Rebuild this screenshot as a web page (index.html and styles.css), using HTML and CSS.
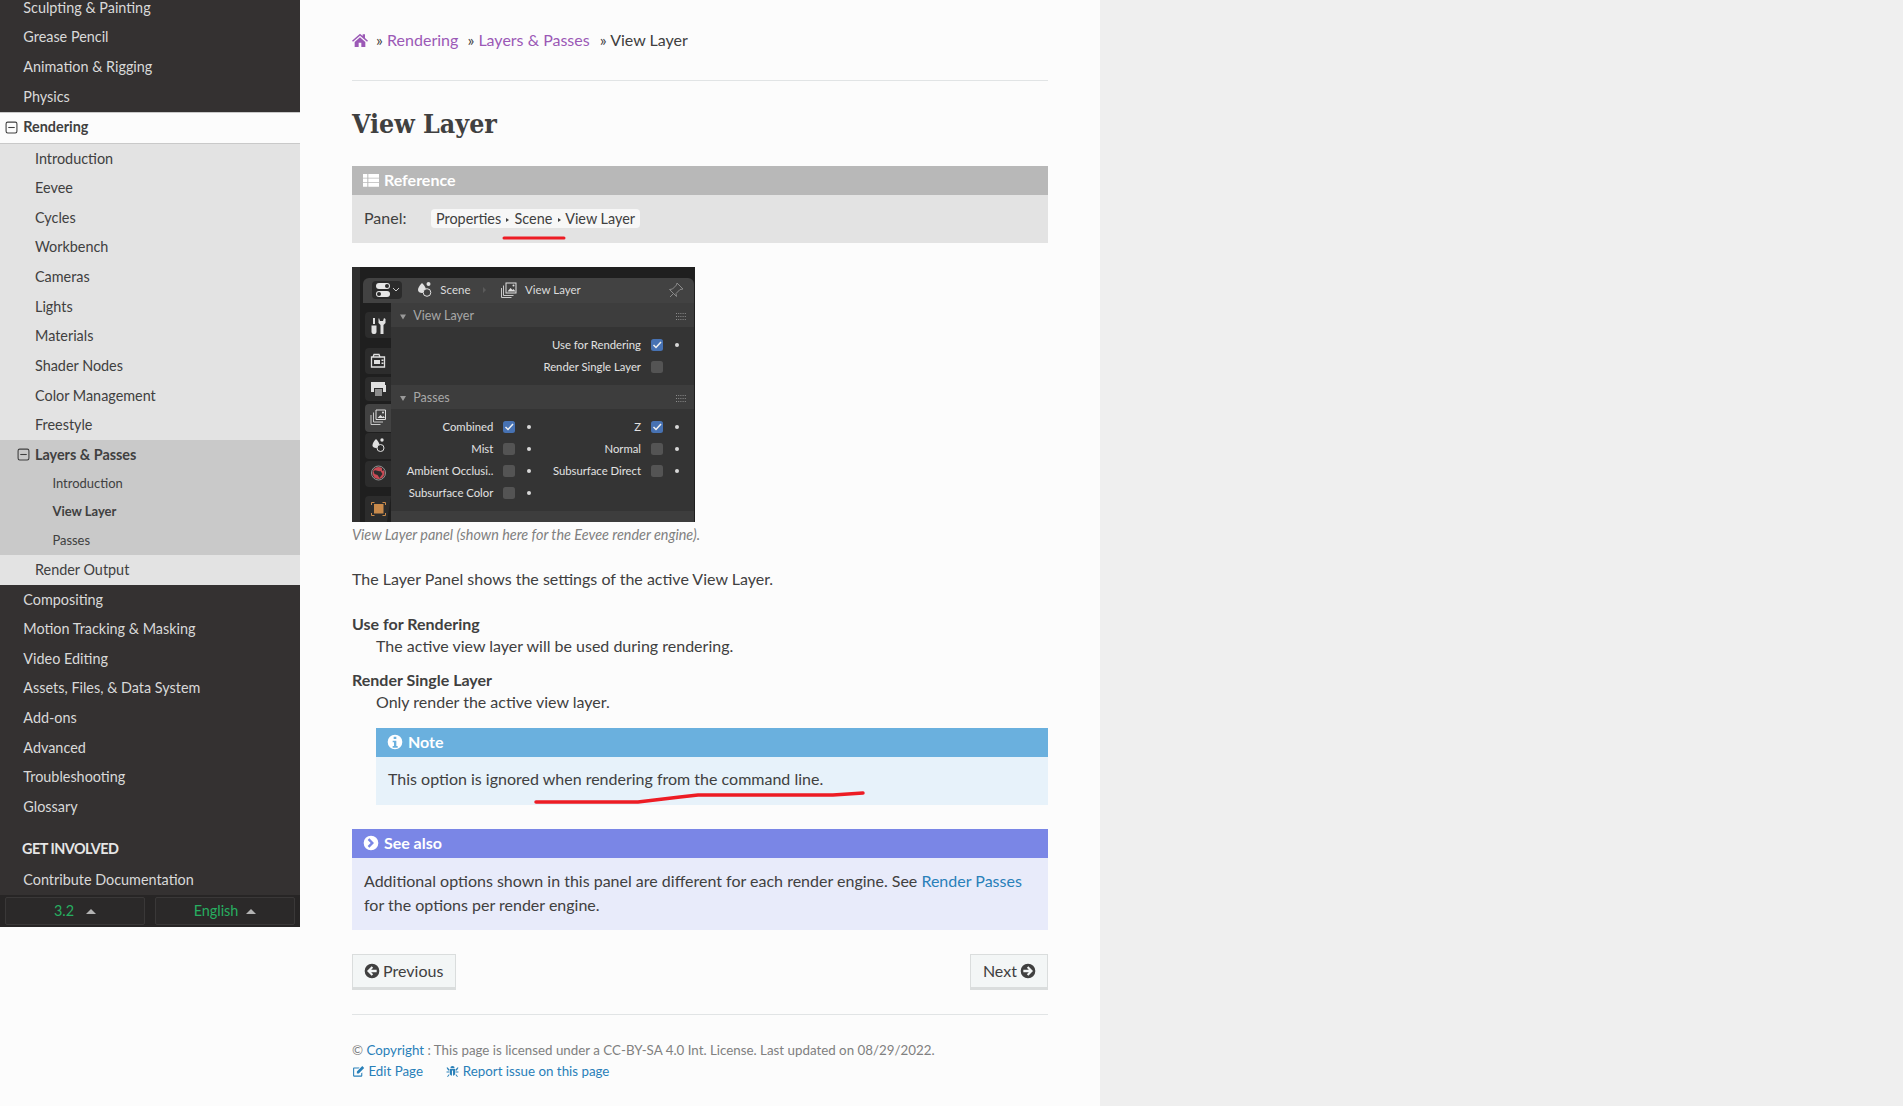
FILE: index.html
```html
<!DOCTYPE html>
<html lang="en">
<head>
    <meta charset="utf-8">
    <meta name="viewport" content="width=device-width, initial-scale=1.0">
    <title>View Layer</title>
    <link rel="stylesheet" href="styles.css">
</head>
<body>
<div class="page">
    <!-- sidebar, scrolled down a bit like the original -->
    <nav class="sidebar">
        <div class="menu">
            <a class="l1">Sculpting &amp; Painting</a>
            <a class="l1">Grease Pencil</a>
            <a class="l1">Animation &amp; Rigging</a>
            <a class="l1">Physics</a>
            <a class="l1 current">
                <svg class="toggle" viewBox="0 0 12 12"><rect x="1" y="1" width="10" height="10" rx="1.5"/><path d="M3 6h6"/></svg>
                Rendering
            </a>
            <div class="sub">
                <a class="l2">Introduction</a>
                <a class="l2">Eevee</a>
                <a class="l2">Cycles</a>
                <a class="l2">Workbench</a>
                <a class="l2">Cameras</a>
                <a class="l2">Lights</a>
                <a class="l2">Materials</a>
                <a class="l2">Shader Nodes</a>
                <a class="l2">Color Management</a>
                <a class="l2">Freestyle</a>
                <div class="sub-current">
                    <a class="l2 open">
                        <svg class="toggle" viewBox="0 0 12 12"><rect x="1" y="1" width="10" height="10" rx="1.5"/><path d="M3 6h6"/></svg>
                        Layers &amp; Passes
                    </a>
                    <a class="l3">Introduction</a>
                    <a class="l3 active">View Layer</a>
                    <a class="l3">Passes</a>
                </div>
                <a class="l2">Render Output</a>
            </div>
            <a class="l1">Compositing</a>
            <a class="l1">Motion Tracking &amp; Masking</a>
            <a class="l1">Video Editing</a>
            <a class="l1">Assets, Files, &amp; Data System</a>
            <a class="l1">Add-ons</a>
            <a class="l1">Advanced</a>
            <a class="l1">Troubleshooting</a>
            <a class="l1">Glossary</a>
            <p class="caption">GET INVOLVED</p>
            <a class="l1">Contribute Documentation</a>
        </div>
        <div class="switchers">
            <div class="switcher"><span>3.2</span><i class="caret"></i></div>
            <div class="switcher narrow"><span>English</span><i class="caret"></i></div>
        </div>
    </nav>

    <main class="content">
        <div class="breadcrumbs">
            <a class="home" href="#"><svg class="icon" viewBox="0 0 24 24"><path d="M12 2.500 0 13l1.500 1.800L12 5.700l10.500 9.100L24 13l-4.500-3.900V3.500h-3.500v2.600zM4 15v7.500h6V16h4v6.500h6V15L12 8z"/></svg></a>
            <span class="sep">»</span> <a href="#">Rendering</a>
            <span class="sep gap">»</span> <a href="#">Layers &amp; Passes</a>
            <span class="sep last">»</span> View Layer
        </div>
        <hr class="rule">

        <h1>View Layer</h1>

        <div class="admonition reference">
            <p class="admonition-title">
                <svg class="icon" viewBox="0 0 24 24"><path d="M0 3h6.500v5.500H0zM8 3h16v5.500H8zM0 9.800h6.500v5.500H0zM8 9.800h16v5.500H8zM0 16.600h6.500V22H0zM8 16.600h16V22H8z"/></svg>
                Reference
            </p>
            <div class="admonition-body panel-line">
                <span class="field-name">Panel:</span>
                <span class="guilabel">Properties <i class="tri"></i> Scene <i class="tri"></i> View Layer</span>
            </div>
            <svg class="scribble" width="70" height="8" viewBox="0 0 70 8"><path d="M2 4h60"/></svg>
        </div>

        <svg class="shot" width="343" height="255" viewBox="0 0 343 255">
            <rect width="343" height="255" fill="#1f1f1f"/>
            <rect width="8" height="255" fill="#2f2f2f"/>
            <path d="M11 36V17a6 6 0 0 1 6-6h319a6 6 0 0 1 6 6v19z" fill="#424242"/>
            <rect x="39" y="36" width="303" height="24" fill="#3d3d3d"/>
            <rect x="39" y="60" width="303" height="58" fill="#343434"/>
            <rect x="39" y="118" width="303" height="24" fill="#3d3d3d"/>
            <rect x="39" y="142" width="303" height="102" fill="#343434"/>
            <rect x="39" y="244" width="303" height="11" fill="#3d3d3d"/>

            <!-- tabs -->
            <g fill="#2c2c2c">
                <path d="M39 45H17a4 4 0 0 0-4 4v18a4 4 0 0 0 4 4h22z"/>
                <path d="M39 81H17a4 4 0 0 0-4 4v18a4 4 0 0 0 4 4h22z"/>
                <path d="M39 110H17a4 4 0 0 0-4 4v16a4 4 0 0 0 4 4h22z"/>
                <path d="M39 166H17a4 4 0 0 0-4 4v18a4 4 0 0 0 4 4h22z"/>
                <path d="M39 194H17a4 4 0 0 0-4 4v18a4 4 0 0 0 4 4h22z"/>
                <path d="M39 229H17a4 4 0 0 0-4 4v22h22z"/>
            </g>
            <path d="M39 137H17a4 4 0 0 0-4 4v20a4 4 0 0 0 4 4h22z" fill="#424242"/>

            <!-- editor type button -->
            <rect x="20" y="14" width="30" height="18" rx="4" fill="#2b2b2b"/>
            <rect x="24" y="16" width="14" height="6" rx="3" fill="#e6e6e6"/>
            <rect x="24" y="24" width="14" height="6" rx="3" fill="#e6e6e6"/>
            <circle cx="35" cy="19" r="2" fill="#2b2b2b"/>
            <circle cx="27" cy="27" r="2" fill="#2b2b2b"/>
            <path d="M41 21l3 3 3-3" fill="none" stroke="#ccc" stroke-width="1"/>

            <!-- breadcrumb icons -->
            <path d="M70 16c3 3 4 5 4 7 0 2-2 3-4 3s-4-1-4-3c0-2 1-4 4-7z" fill="#e0e0e0"/>
            <circle cx="76.500" cy="17" r="2" fill="#e0e0e0"/>
            <circle cx="75" cy="25.500" r="3.800" fill="#424242" stroke="#e0e0e0"/>
            <path d="M131 20l3 3-3 3z" fill="#5a5a5a"/>
            <rect x="154" y="16" width="10" height="10" fill="#424242" stroke="#e0e0e0"/>
            <path d="M151.500 18.500v10h10M149.500 21v9.500h10" fill="none" stroke="#c8c8c8"/>
            <path d="M155.500 24.500l3-3.500 2 2 1-1 2 2.500z" fill="#e0e0e0"/>
            <circle cx="161.500" cy="18.500" r="1" fill="#e0e0e0"/>
            <path d="M318 30l4-4M325 16l6 6-3 .5-4 4 .5 3-7-7 3-.5 4-4z" fill="none" stroke="#8a8a8a"/>

            <!-- tab icons -->
            <g fill="#e0e0e0">
                <path d="M21 51h2v6h-2zM19.500 58.500h5V65a2 2 0 0 1-2 2h-1a2 2 0 0 1-2-2z"/>
                <path d="M27 51l1 3h3l1-3 1.500 1v4l-2 2v9h-3v-9l-2-2v-4z"/>
                <path d="M19.500 90h13v10h-13zM22 87.500h5l1 2.500h-7z" fill="none" stroke="#e0e0e0" stroke-width="1.300"/>
                <path d="M22 93h6v4h-6zM29.500 92.500h2v1.500h-2zM29.500 95.500h2v1.500h-2z"/>
                <path d="M19 115h14v3h1v7h-3v-4H22v4h-3z"/>
                <path d="M23 122h7v7h-7z" fill="#8c8c8c"/>
                <path d="M24 172c2.500 2.500 3.500 4.500 3.500 6.500 0 1.500-1.500 2.500-3.500 2.500s-3.500-1-3.500-2.500c0-2 1-4 3.500-6.500z"/>
                <circle cx="30" cy="173" r="1.700"/>
                <circle cx="28.500" cy="181" r="3.500" fill="#2c2c2c" stroke="#e0e0e0"/>
                <path d="M24 143h9.500v9.500H24z" fill="#424242" stroke="#e0e0e0"/>
                <path d="M21.500 145.500v9.500H31M19 148v9.500h9.500" fill="none" stroke="#c8c8c8"/>
                <path d="M25.500 151l3-3 2 2 1-1 1.500 2z"/>
                <circle cx="31" cy="145.500" r="1"/>
            </g>
            <circle cx="26.500" cy="206" r="6" fill="#c94b55"/>
            <path d="M21.500 204c3-2 4 1 7 0l2 3-3 4-2-3-3-1zM30 200l2 3-2 1z" fill="#2c2c2c"/>
            <circle cx="26.500" cy="206" r="7" fill="none" stroke="#a8a8a8" stroke-width=".800"/>
            <rect x="22" y="237" width="9.500" height="9.500" fill="#c98a4b"/>
            <path d="M19.500 238v-2.500h3M30.500 235.500h3v2.500M33.500 246v2.500h-3M22.500 248.500h-3V246" fill="none" stroke="#c98a4b"/>

            <!-- panel headers -->
            <path d="M48 47.500h6l-3 5zM48 129h6l-3 5z" fill="#9a9a9a"/>
            <path d="M324 46.500h10M324 49.500h10M324 52.500h10M324 128.500h10M324 131.500h10M324 134.500h10" fill="none" stroke="#8c8c8c" stroke-dasharray="1 1.200"/>

            <!-- labels -->
            <g class="shot-text">
                <text x="88.300" y="27">Scene</text>
                <text x="173" y="27">View Layer</text>
            </g>
            <g class="shot-head">
                <text x="61.300" y="53">View Layer</text>
                <text x="61.300" y="134.500">Passes</text>
            </g>
            <g class="shot-label">
                <text x="289" y="82.300">Use for Rendering</text>
                <text x="289" y="104.300">Render Single Layer</text>
                <text x="141.300" y="164">Combined</text>
                <text x="141.300" y="186">Mist</text>
                <text x="141.300" y="208">Ambient Occlusi..</text>
                <text x="141.300" y="230">Subsurface Color</text>
                <text x="289" y="164">Z</text>
                <text x="289" y="186">Normal</text>
                <text x="289" y="208">Subsurface Direct</text>
            </g>

            <!-- checkboxes -->
            <g fill="#545454">
                <rect x="299" y="94" width="12" height="12" rx="2.500"/>
                <rect x="151" y="176" width="12" height="12" rx="2.500"/>
                <rect x="151" y="198" width="12" height="12" rx="2.500"/>
                <rect x="151" y="220" width="12" height="12" rx="2.500"/>
                <rect x="299" y="176" width="12" height="12" rx="2.500"/>
                <rect x="299" y="198" width="12" height="12" rx="2.500"/>
            </g>
            <g fill="#4772b3">
                <rect x="299" y="72" width="12" height="12" rx="2.500"/>
                <rect x="151" y="154" width="12" height="12" rx="2.500"/>
                <rect x="299" y="154" width="12" height="12" rx="2.500"/>
            </g>
            <g fill="none" stroke="#f0f0f0" stroke-width="1.500">
                <path d="M301.500 78l2.500 2.500 5-5.500M153.500 160l2.500 2.500 5-5.500M301.500 160l2.500 2.500 5-5.500"/>
            </g>

            <!-- animate dots -->
            <g fill="#d8d8d8">
                <circle cx="325" cy="78" r="2"/>
                <circle cx="177" cy="160" r="2"/>
                <circle cx="177" cy="182" r="2"/>
                <circle cx="177" cy="204" r="2"/>
                <circle cx="177" cy="226" r="2"/>
                <circle cx="325" cy="160" r="2"/>
                <circle cx="325" cy="182" r="2"/>
                <circle cx="325" cy="204" r="2"/>
            </g>
        </svg>
        <p class="figure-caption">View Layer panel (shown here for the Eevee render engine).</p>

        <p class="intro">The Layer Panel shows the settings of the active View Layer.</p>

        <dl class="defs">
            <dt>Use for Rendering</dt>
            <dd>The active view layer will be used during rendering.</dd>
            <dt>Render Single Layer</dt>
            <dd>
                Only render the active view layer.
                <div class="admonition note">
                    <p class="admonition-title">
                        <svg class="icon" viewBox="0 0 24 24"><path fill-rule="evenodd" d="M12 1a11 11 0 1 0 0 22 11 11 0 0 0 0-22zM10 4h4v3.500h-4zM8.500 10H14v8h2v2.500H8.500V18h2v-5.500h-2z"/></svg>
                        Note
                    </p>
                    <div class="admonition-body">This option is ignored when rendering from the command line.</div>
                    <svg class="scribble wavy" width="340" height="16" viewBox="0 0 340 16"><path d="M2 12h102l42-5 18-2h135l30-2"/></svg>
                </div>
            </dd>
        </dl>

        <div class="admonition seealso">
            <p class="admonition-title">
                <svg class="icon" viewBox="0 0 24 24"><path fill-rule="evenodd" d="M12 1a11 11 0 1 0 0 22 11 11 0 0 0 0-22zM9.500 5l7 7-7 7-2.500-2.500 4.500-4.500L7 7.500z"/></svg>
                See also
            </p>
            <div class="admonition-body">Additional options shown in this panel are different for each render engine. See <a href="#">Render Passes</a> for the options per render engine.</div>
        </div>

        <div class="pager">
            <a class="btn">
                <svg class="icon" viewBox="0 0 24 24"><path fill-rule="evenodd" d="M12 1a11 11 0 1 0 0 22 11 11 0 0 0 0-22zM11.500 5l2.200 2.200-3 3H19v3.600h-8.300l3 3-2.200 2.200L4.500 12z"/></svg>
                Previous
            </a>
            <a class="btn">
                Next
                <svg class="icon" viewBox="0 0 24 24"><path fill-rule="evenodd" d="M12 1a11 11 0 1 0 0 22 11 11 0 0 0 0-22zM12.500 5l7 7-7 7-2.200-2.200 3-3H5v-3.600h8.300l-3-3z"/></svg>
            </a>
        </div>
        <hr class="rule foot-rule">

        <footer class="footer">
            <p>© <a href="#">Copyright</a> : This page is licensed under a CC-BY-SA 4.0 Int. License. Last updated on 08/29/2022.</p>
            <p class="footer-links">
                <a href="#"><svg class="icon" viewBox="0 0 24 24"><path d="M19 14v6a1.500 1.500 0 0 1-1.500 1.500h-14A1.500 1.500 0 0 1 2 20V6a1.500 1.500 0 0 1 1.500-1.500H14l-2 2H4v13h13v-4.500zM9 12 19 2l3.500 3.500-10 10H9z"/></svg> Edit Page</a>
                <a href="#"><svg class="icon" viewBox="0 0 24 24"><path d="M8 6a4 4 0 0 1 8 0zM7 7.500h10V15a5 5 0 0 1-4 5V10h-2v10a5 5 0 0 1-4-5zM1 5l1.500-1L6 8v2H4zM23 5l-1.500-1L18 8v2h2zM1 12h5v2H1zM23 12h-5v2h5zM2 21l4-5v3l-2.500 3zM22 21l-4-5v3l2.500 3z"/></svg> Report issue on this page</a>
            </p>
        </footer>
    </main>
</div>
</body>
</html>
```

FILE: styles.css
```css
* {
    box-sizing: border-box;
}

html, body {
    margin: 0;
    padding: 0;
}

body {
    height: 1106px;
    overflow: hidden;
    background-color: #efefef;
    font-family: Lato, "Liberation Sans", sans-serif;
    font-size: 16px;
    line-height: 24px;
    color: #404040;
}

a {
    color: #2980b9;
    text-decoration: none;
}

p {
    margin: 0;
}

.icon {
    width: 14px;
    height: 14px;
    fill: currentColor;
    vertical-align: -2px;
}

.page {
    display: flex;
    align-items: flex-start;
    width: 1100px;
    height: 1106px;
    background-color: #fcfcfc;
}

/* sidebar */
.sidebar {
    flex: 0 0 300px;
    height: 927px;
    display: flex;
    flex-direction: column;
    overflow: hidden;
    background-color: #343131;
}

.menu {
    flex: 1;
    min-height: 0;
    margin-top: -7px;
}

.menu a {
    display: block;
    position: relative;
    line-height: 18px;
    font-size: 14.4px;
    padding: 5.825px 23.3px;
}

.l1 {
    color: #d9d9d9;
}

.menu .current {
    padding-top: 5.300px;
    padding-bottom: 7px;
    color: #404040;
    font-weight: 700;
    background-color: #fcfcfc;
    border-top: 1px solid #c9c9c9;
    border-bottom: 1px solid #c9c9c9;
}

.sub {
    background-color: #e3e3e3;
}

.menu .l2 {
    padding-left: 35px;
    color: #404040;
}

.sub-current {
    padding-bottom: 1px;
    background-color: #c9c9c9;
}

.menu .open {
    padding-bottom: 4.825px;
    font-weight: 700;
}

.menu .l3 {
    padding: 5.250px 0 5.250px 52.400px;
    font-size: 12.960px;
    color: #404040;
}

.menu .active {
    font-weight: 700;
}

.toggle {
    position: absolute;
    top: 8px;
    left: 5px;
    width: 13px;
    height: 13px;
    fill: none;
    stroke: #404040;
    stroke-width: 1;
}

.l2 .toggle {
    left: 17px;
    top: 8px;
}

.caption {
    margin-top: 18px;
    padding-left: 22px;
    height: 18px;
    line-height: 18px;
    font-size: 14.4px;
    font-weight: 700;
    letter-spacing: -0.5px;
    color: #e6e6e6;
    margin-bottom: 7px;
}

.switchers {
    flex: 0 0 32px;
    display: flex;
    gap: 10px;
    padding: 2px 5px;
    background-color: #272525;
}

.switcher {
    flex: 1;
    display: flex;
    align-items: center;
    justify-content: center;
    gap: 12px;
    border: 1px solid #3a3838;
    border-radius: 2px;
    background-color: #2b2929;
    font-size: 14.4px;
    color: #27ae60;
}

.switcher.narrow {
    gap: 8px;
}

.caret {
    width: 0;
    height: 0;
    border-left: 5px solid transparent;
    border-right: 5px solid transparent;
    border-bottom: 5px solid #b3b3b3;
}

/* content */
.content {
    flex: 1;
    min-width: 0;
    padding: 28px 52px 0;
}

.breadcrumbs a {
    color: #9b59b6;
}

.home .icon {
    width: 16px;
    height: 16px;
    margin-right: -1px;
}

.sep {
    margin-left: 5px;
}

.sep.gap {
    margin-left: 5px;
}

.sep.last {
    margin-left: 6px;
}

.rule {
    margin: 28px 0 0;
    border: 0;
    border-top: 1px solid #e1e4e5;
}

h1 {
    margin: 24px 0 23px;
    height: 38px;
    font-family: "DejaVu Serif Condensed", "DejaVu Serif", serif;
    font-size: 26.500px;
    line-height: 38px;
    font-weight: 700;
    color: #404040;
}

.admonition {
    position: relative;
}

.admonition-title {
    height: 29px;
    padding: 0 12px;
    line-height: 27px;
    font-weight: 700;
    color: #fff;
}

.admonition-title .icon {
    width: 16px;
    height: 16px;
    margin: 0 1px 0 -1px;
}

.admonition-body {
    padding: 11px 12px 13px;
}

.reference .admonition-title {
    background-color: #b8b8b8;
}

.reference .admonition-body {
    background-color: #e3e3e3;
}

.panel-line {
    display: flex;
    height: 48px;
    align-items: center;
}

.field-name {
    width: 67px;
}

.guilabel {
    padding: 0 5px;
    height: 19px;
    line-height: 19px;
    font-size: 14.4px;
    border-radius: 4px;
    background-color: #f7f7f7;
}

.tri {
    display: inline-block;
    margin: 0 1.500px;
    vertical-align: 2px;
    border-left: 3px solid #404040;
    border-top: 2px solid transparent;
    border-bottom: 2px solid transparent;
}

/* hand drawn marks on top of the screenshot */
.scribble {
    position: absolute;
    left: 150px;
    top: 68px;
    fill: none;
    stroke: #ed1c24;
    stroke-width: 3;
    stroke-linecap: round;
}

.scribble.wavy {
    left: 158px;
    top: 62px;
    stroke-width: 3.500;
}

.shot {
    display: block;
    margin-top: 24px;
}

.shot text {
    font-family: Lato, sans-serif;
}

.shot-text {
    font-size: 11.500px;
    fill: #dcdcdc;
}

.shot-head {
    font-size: 12.500px;
    fill: #a8a8a8;
}

.shot-label {
    font-size: 11.300px;
    fill: #e2e2e2;
    text-anchor: end;
}

.figure-caption {
    margin-top: 1px;
    font-size: 14.400px;
    font-style: italic;
    color: #808080;
}

.intro {
    margin-top: 20px;
}

.defs {
    margin: 22px 0 0;
}

dt {
    font-weight: 700;
    line-height: 22px;
}

dd {
    margin: 0 0 12px 24px;
    line-height: 22px;
}

.note {
    margin-top: 15px;
}

.note .admonition-title {
    background-color: #6ab0de;
}

.note .admonition-body {
    height: 48px;
    background-color: #e7f2fa;
}

.seealso {
    margin-top: 24px;
}

.seealso .admonition-title {
    background-color: #7a86e6;
}

.seealso .admonition-body {
    height: 72px;
    background-color: #e8ebfa;
}

.pager {
    display: flex;
    justify-content: space-between;
    margin-top: 24px;
}

.btn {
    padding: 4px 12px 6px;
    height: 36px;
    line-height: 24px;
    color: #404040;
    background-color: #f3f6f6;
    border: 1px solid rgba(0, 0, 0, 0.1);
    box-shadow: inset 0 -2px 0 0 rgba(0, 0, 0, 0.1);
}

.btn .icon {
    width: 16px;
    height: 16px;
    margin: 0 -1px;
}

.foot-rule {
    margin-top: 24px;
}

.footer {
    margin-top: 25px;
    font-size: 13.330px;
    line-height: 21px;
    color: #808080;
}

.footer-links a {
    margin-right: 20px;
}

.footer-links .icon {
    width: 13px;
    height: 13px;
}
```
